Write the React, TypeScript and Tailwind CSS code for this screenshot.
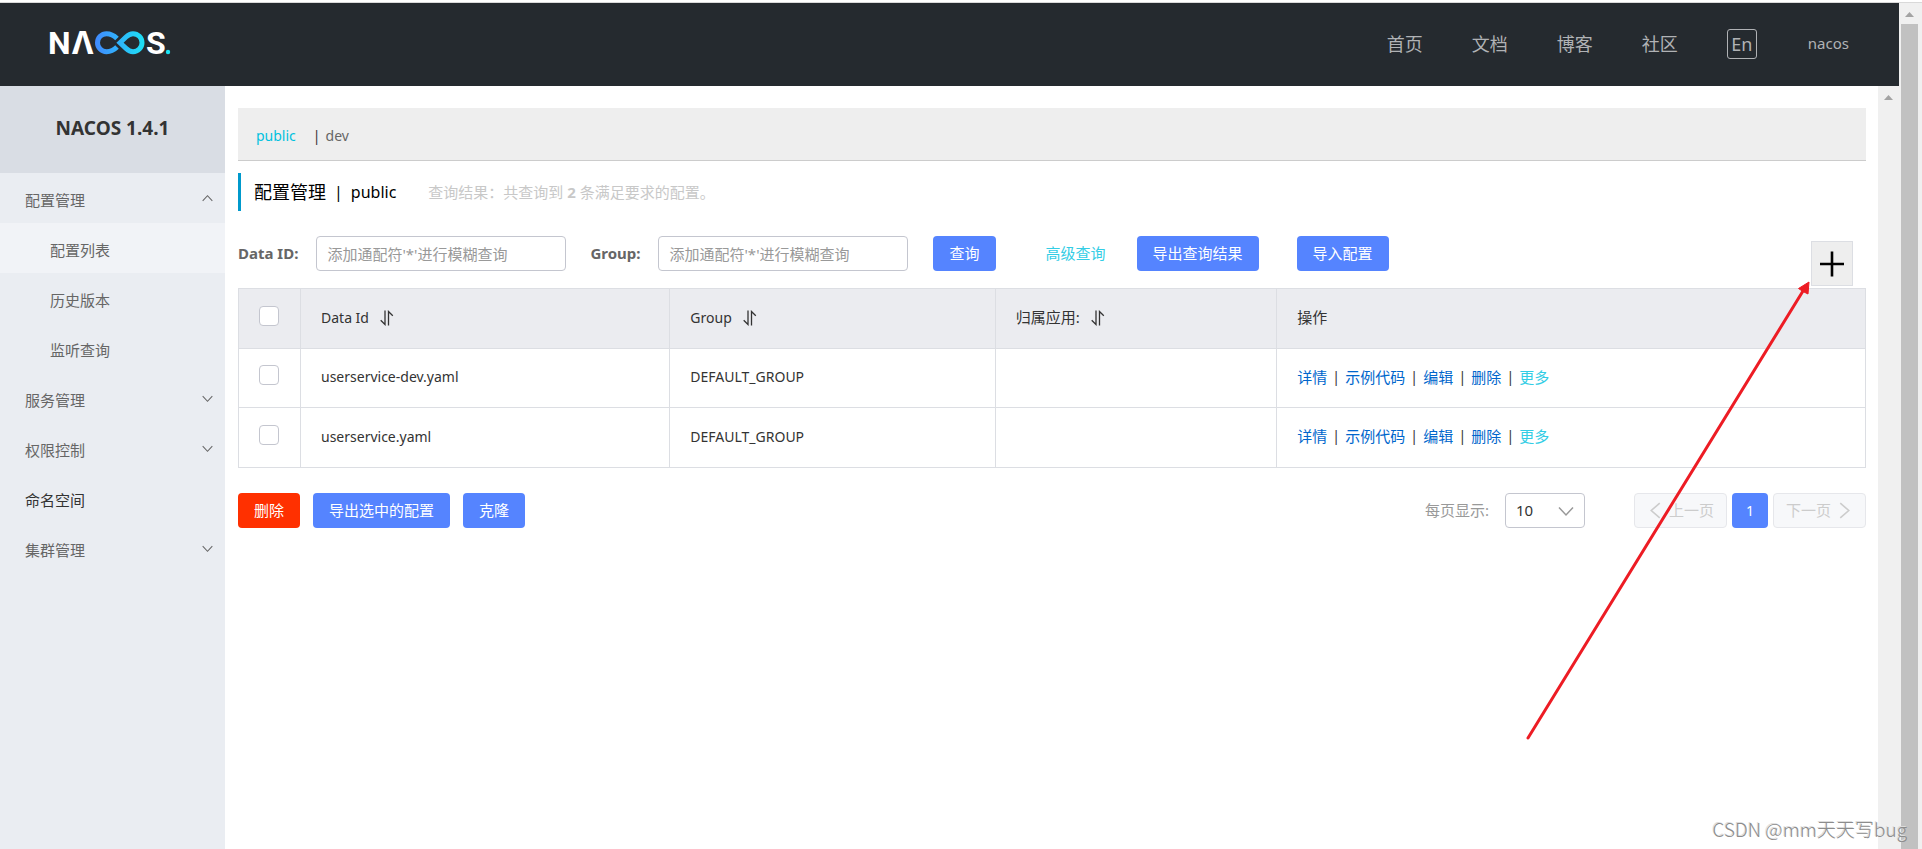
import { useState } from "react";
import type { ReactNode } from "react";

const NAV = ["首页", "文档", "博客", "社区"];

type MenuItem = { label: string; open?: boolean; leaf?: boolean; children?: string[] };

const MENU: MenuItem[] = [
  { label: "配置管理", open: true, children: ["配置列表", "历史版本", "监听查询"] },
  { label: "服务管理" },
  { label: "权限控制" },
  { label: "命名空间", leaf: true },
  { label: "集群管理" },
];

const ROWS = [
  { id: "userservice-dev.yaml", group: "DEFAULT_GROUP" },
  { id: "userservice.yaml", group: "DEFAULT_GROUP" },
];

const ACTIONS = ["详情", "示例代码", "编辑", "删除"];

function Logo() {
  return (
    <svg width="130" height="52" viewBox="-4 -11 130 52" role="img" aria-label="NACOS">
      <defs>
        <linearGradient id="loop" gradientUnits="userSpaceOnUse" x1="44" y1="0" x2="96" y2="0">
          <stop offset="0" stopColor="#4287ff" />
          <stop offset="1" stopColor="#1be4f5" />
        </linearGradient>
      </defs>
      <g fill="#fff" fontFamily="Roboto, sans-serif" fontSize="32" fontWeight="700">
        <text x="-2" y="25">N</text>
        <text x="22" y="25" fontFamily="Noto Sans, sans-serif">Λ</text>
        <text x="96" y="25">S</text>
      </g>
      <g fill="none" stroke="url(#loop)" strokeWidth="5">
        <path d="M67 9.500C63.500 6 60.500 4.700 56.500 4.700A9 9 0 0 0 56.500 22.700C60.500 22.700 63.500 21.500 67 18" />
        <path d="M70 13.700L76 8C78.500 5.600 80.500 4.700 83 4.700A9 9 0 0 1 83 22.700C80.500 22.700 78.500 21.800 76 19.400Z" />
      </g>
      <circle cx="118" cy="23" r="2.200" fill="#1be4f5" />
    </svg>
  );
}

function Chevron({ dir, size, className }: { dir: "up" | "down" | "left" | "right"; size: number; className?: string }) {
  const d = {
    up: "M1 11.500L8 4L15 11.500",
    down: "M1 4.500L8 12L15 4.500",
    left: "M12 1L4 8L12 15",
    right: "M4 1L12 8L4 15",
  }[dir];
  return (
    <svg width={size} height={size} viewBox="0 0 16 16" fill="none" stroke="currentColor" strokeWidth="1.500" className={className} aria-hidden="true">
      <path d={d} />
    </svg>
  );
}

function SortIcon() {
  return (
    <svg width="14" height="16" viewBox="0 0 14 16" fill="none" stroke="currentColor" strokeWidth="1.300" aria-hidden="true">
      <path d="M5 .5V14.500L.7 10.200M8.500 15.500V1.500L12.800 5.800" />
    </svg>
  );
}

function Button({ children, danger }: { children: ReactNode; danger?: boolean }) {
  return (
    <button
      type="button"
      className={`h-[35px] rounded-[4px] px-4 text-[15px] whitespace-nowrap text-white ${danger ? "bg-[#ff3000]" : "bg-[#5584ff]"}`}
    >
      {children}
    </button>
  );
}

function Check({ label }: { label: string }) {
  return (
    <input
      type="checkbox"
      aria-label={label}
      className="mb-1 block size-5 appearance-none rounded-[4px] border border-[#c4c6cf] bg-white checked:bg-[#5584ff]"
    />
  );
}

function Field({ id, label }: { id: string; label: string }) {
  return (
    <div className="flex items-center gap-[18px]">
      <label htmlFor={id} className="text-[15px] font-bold whitespace-nowrap text-[#666]">
        {label}
      </label>
      <input
        id={id}
        placeholder="添加通配符'*'进行模糊查询"
        className="h-[35px] w-[250px] rounded-[4px] border border-[#c4c6cf] px-[10px] text-[15px] placeholder:text-[#999]"
      />
    </div>
  );
}

function ScrollTrack({ thumb }: { thumb?: boolean }) {
  return (
    <div className={`flex shrink-0 flex-col bg-[#f0f0f0] ${thumb ? "w-[23px]" : "w-[21px]"}`} aria-hidden="true">
      <svg width="21" height="21" viewBox="0 0 21 21" fill="#a3a3a3" className="shrink-0">
        <path d="M6 14L10.500 9L15 14Z" />
      </svg>
      {thumb && <div className="mr-1 ml-0.5 flex-1 bg-[#c1c1c1]" />}
    </div>
  );
}

function Header() {
  return (
    <header className="flex h-[83px] shrink-0 items-center justify-between bg-[#252a2f] pr-[50px] pb-0.5 pl-[46px] text-lg text-[#b0b2b5]">
      <a href="#home">
        <Logo />
      </a>
      <nav className="flex items-center gap-[49px]">
        {NAV.map((n) => (
          <a key={n} href="#nav">
            {n}
          </a>
        ))}
        <button type="button" className="mr-0.5 size-[30px] rounded-[3px] border border-[#b0b2b5] leading-6">
          En
        </button>
        <a href="#user" className="text-[15px]">
          nacos
        </a>
      </nav>
    </header>
  );
}

function Sidebar() {
  return (
    <aside className="w-[225px] shrink-0 bg-[#eaedf2] text-[15px] text-[#666]">
      <h1 className="flex h-[87px] items-center justify-center bg-[#d9dde4] pb-0.5 text-[19px] font-bold text-[#333]">NACOS 1.4.1</h1>
      <ul>
        {MENU.map((m) => (
          <li key={m.label}>
            <a href="#menu" className={`flex h-[50px] items-center justify-between pt-1 pr-3 pl-[25px] ${m.leaf ? "text-[#333]" : ""}`}>
              {m.label}
              {!m.leaf && <Chevron dir={m.open ? "up" : "down"} size={11} className="mb-1" />}
            </a>
            {m.children && (
              <ul>
                {m.children.map((c, i) => (
                  <li key={c}>
                    <a href="#menu" className={`flex h-[50px] items-center pt-1 pl-[50px] ${i === 0 ? "bg-[#f1f3f7]" : ""}`}>
                      {c}
                    </a>
                  </li>
                ))}
              </ul>
            )}
          </li>
        ))}
      </ul>
    </aside>
  );
}

function ConfigTable() {
  const head = "border border-[#dcdee3] px-5 pb-0.5 text-left font-normal";
  const cell = "border border-[#dcdee3] px-5 pb-0.5";
  return (
    <table className="w-full table-fixed border-collapse text-[#333]">
      <thead className="bg-[#ebecf0]">
        <tr className="h-[60px]">
          <th className={`${head} w-[62px]`}>
            <Check label="全选" />
          </th>
          <th className={`${head} w-[22.7%]`}>
            <span className="flex items-center gap-[11px] text-sm">
              Data Id <SortIcon />
            </span>
          </th>
          <th className={`${head} w-[20%]`}>
            <span className="flex items-center gap-[11px] text-sm">
              Group <SortIcon />
            </span>
          </th>
          <th className={`${head} w-[17.3%]`}>
            <span className="flex items-center gap-[11px] text-[15px]">
              归属应用: <SortIcon />
            </span>
          </th>
          <th className={`${head} text-[15px]`}>操作</th>
        </tr>
      </thead>
      <tbody>
        {ROWS.map((r) => (
          <tr key={r.id} className="h-[59px] last:h-[60px]">
            <td className={cell}>
              <Check label={r.id} />
            </td>
            <td className={`${cell} text-sm`}>{r.id}</td>
            <td className={`${cell} text-sm`}>{r.group}</td>
            <td className={cell} />
            <td className={`${cell} text-[15px]`}>
              <div className="flex gap-[5px] whitespace-nowrap">
                {ACTIONS.map((a) => (
                  <span key={a} className="flex gap-[5px]">
                    <a href="#action" className="text-[#0066cc]">
                      {a}
                    </a>
                    <span className="w-2 text-center text-sm leading-[22px]">|</span>
                  </span>
                ))}
                <a href="#more" className="text-[#33cde5]">
                  更多
                </a>
              </div>
            </td>
          </tr>
        ))}
      </tbody>
    </table>
  );
}

function Pager() {
  const [size, setSize] = useState("10");
  const step = "flex h-[35px] items-center gap-[5px] rounded-[4px] border border-[#e6e7eb] bg-[#f7f8fa] px-3 text-[#ccc]";
  return (
    <div className="flex items-center text-[15px] whitespace-nowrap">
      <label htmlFor="size" className="mr-4 text-[#999]">
        每页显示:
      </label>
      <div className="relative mr-[49px]">
        <select
          id="size"
          value={size}
          onChange={(e) => setSize(e.target.value)}
          className="h-[35px] w-20 appearance-none rounded-[4px] border border-[#c4c6cf] bg-white px-[10px] text-[15px] text-[#333]"
        >
          <option>10</option>
          <option>20</option>
          <option>30</option>
        </select>
        <Chevron dir="down" size={16} className="pointer-events-none absolute top-[10px] right-[11px] text-[#999]" />
      </div>
      <div className="flex gap-[5px]">
        <button type="button" disabled className={step}>
          <Chevron dir="left" size={17} />
          上一页
        </button>
        <button type="button" className="h-[35px] w-9 rounded-[4px] bg-[#5584ff] text-sm text-white">
          1
        </button>
        <button type="button" disabled className={step}>
          下一页
          <Chevron dir="right" size={17} />
        </button>
      </div>
    </div>
  );
}

export default function App() {
  return (
    <div className="relative flex h-screen flex-col overflow-hidden bg-white font-['Noto_Sans','Noto_Sans_CJK_SC',sans-serif]">
      <div className="h-[3px] shrink-0 border-b border-[#d9d9d9]" />
      <div className="flex min-h-0 flex-1">
        <div className="flex min-w-0 flex-1 flex-col">
          <Header />
          <div className="flex min-h-0 flex-1">
            <Sidebar />
            <main className="min-w-0 flex-1 pt-[22px] pr-3 pl-[13px]">
              <div className="flex h-[53px] items-center border-b border-[#ccc] bg-[#eee] pt-1 pl-[18px] text-sm">
                <a href="#public" className="mr-[17px] text-[#00c1de]">
                  public
                </a>
                <span className="mr-[5px] text-[#333]">|</span>
                <a href="#dev" className="text-[#666]">
                  dev
                </a>
              </div>
              <div className="mt-3 flex h-[38px] items-center border-l-3 border-[#0099cc] pl-[13px]">
                <h2 className="flex items-center gap-2 text-base text-black">
                  <span className="text-lg">配置管理</span>
                  <span>|</span>
                  <span>public</span>
                </h2>
                <p className="ml-8 text-[15px] text-[#c8c8c8]">
                  查询结果：共查询到 <strong>2</strong> 条满足要求的配置。
                </p>
              </div>
              <form className="mt-[25px] flex items-start" onSubmit={(e) => e.preventDefault()}>
                <Field id="dataId" label="Data ID:" />
                <div className="ml-6">
                  <Field id="group" label="Group:" />
                </div>
                <div className="ml-[25px] flex items-center">
                  <Button>查询</Button>
                  <a href="#advanced" className="mr-[31px] ml-[50px] text-[15px] text-[#33cde5]">
                    高级查询
                  </a>
                  <Button>导出查询结果</Button>
                  <div className="ml-[38px]">
                    <Button>导入配置</Button>
                  </div>
                </div>
                <button
                  type="button"
                  aria-label="新建配置"
                  className="mt-[5px] mr-[13px] ml-auto flex h-[45px] w-[42px] items-center justify-center border border-[#dcdee3] bg-[#eee]"
                >
                  <svg width="26" height="26" viewBox="0 0 26 26" stroke="#000" strokeWidth="2.600" fill="none" className="shrink-0" aria-hidden="true">
                    <path d="M13 .5V25.500M1 13H25" />
                  </svg>
                </button>
              </form>
              <div className="mt-[2px]">
                <ConfigTable />
              </div>
              <div className="mt-[25px] flex items-center justify-between">
                <div className="flex gap-[13px]">
                  <Button danger>删除</Button>
                  <Button>导出选中的配置</Button>
                  <Button>克隆</Button>
                </div>
                <Pager />
              </div>
            </main>
            <ScrollTrack />
          </div>
        </div>
        <ScrollTrack thumb />
      </div>
      <svg className="pointer-events-none absolute top-[280px] right-[110px]" width="286" height="460" viewBox="0 0 286 460" fill="#ed1c24" stroke="#ed1c24" aria-hidden="true">
        <path d="M2 458L277 11" strokeWidth="3" strokeLinecap="round" fill="none" />
        <path d="M283 2L282 14L277 11.500L272.500 8.500Z" strokeWidth="1" />
      </svg>
      <p className="pointer-events-none absolute right-[15px] bottom-[6px] font-['Noto_Sans_CJK_SC',sans-serif] text-[19px] font-light text-[#8c8c8c] [text-shadow:-1px_-1px_0_#ddd]">
        CSDN @mm天天写bug
      </p>
    </div>
  );
}
